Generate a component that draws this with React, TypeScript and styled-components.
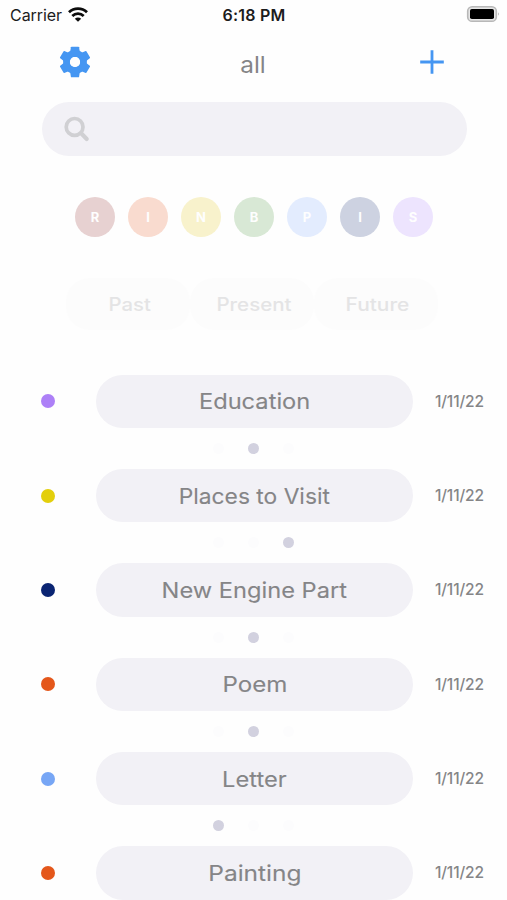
import React from "react";
import styled, { createGlobalStyle } from "styled-components";

const GlobalStyle = createGlobalStyle`
  * { box-sizing: border-box; }
  body { margin: 0; background: #fefefe; overflow: hidden; }
  button { border: 0; padding: 0; background: none; font: inherit; color: inherit; }
`;

const Screen = styled.main`
  width: 507px;
  height: 900px;
  overflow: hidden;
  display: flex;
  flex-direction: column;
  background: #fefefe;
  color: #858587;
  font-family: Inter, "Open Sans", sans-serif;
`;

const StatusBar = styled.header`
  height: 30px;
  flex: none;
  display: grid;
  grid-template-columns: 1fr auto 1fr;
  align-items: center;
  padding: 0 7px 2px 10px;
  color: #1c1c1c;
  font-size: 16px;
`;

const Carrier = styled.div`
  display: flex;
  align-items: center;
  gap: 6px;
  letter-spacing: -0.05px;
  padding-top: 1px;
`;

const Clock = styled.time`
  font-weight: 600;
  letter-spacing: 0.25px;
  padding-top: 2px;
  margin-left: -2px;
`;

const BatterySlot = styled.div`
  display: flex;
  justify-content: flex-end;
`;

const NavBar = styled.nav`
  height: 72px;
  flex: none;
  display: grid;
  grid-template-columns: 30px 1fr 30px;
  align-items: center;
  padding: 0 60px 8px;
`;

const NavButton = styled.button`
  display: grid;
  place-items: center;
  height: 32px;
  color: #4596f2;
`;

const Title = styled.h1`
  margin: 6px 0 0;
  text-align: center;
  font-size: 23px;
  line-height: 30px;
  font-weight: 400;
`;

const Stretch = styled.span<{ $x: number }>`
  display: inline-block;
  white-space: nowrap;
  transform: scaleX(${(p) => p.$x});
`;

const SearchBar = styled.div`
  width: 425px;
  height: 54px;
  flex: none;
  margin-left: 41.5px;
  padding-left: 22px;
  display: flex;
  align-items: center;
  border-radius: 27px;
  background: #f2f1f6;
`;

const Filters = styled.div`
  display: flex;
  gap: 13px;
  margin: 40.5px 0 0 75px;
`;

const Filter = styled.button<{ $color: string }>`
  width: 40px;
  height: 40px;
  border-radius: 50%;
  background: ${(p) => p.$color};
  color: #fefefe;
  font-size: 13px;
  font-weight: 700;
`;

const Tenses = styled.div`
  display: flex;
  flex: none;
  width: 372px;
  height: 52px;
  margin: 41px 0 0 66px;
`;

const Tense = styled.button`
  flex: 1;
  border-radius: 24px;
  background: #fcfcfc;
  color: #e4e4e5;
  font-size: 18px;
  font-weight: 500;
  padding: 2px 0 0 3px;
`;

const Entries = styled.ul`
  list-style: none;
  margin: 45px 0 0;
  padding: 0;
`;

const Entry = styled.li`
  height: 94.35px;
`;

const EntryRow = styled.div`
  display: grid;
  grid-template-columns: 14px 317px 50px;
  column-gap: 41px;
  align-items: center;
  height: 53.5px;
  margin-left: 41px;
`;

const Marker = styled.span<{ $color: string }>`
  width: 14px;
  height: 14px;
  border-radius: 50%;
  background: ${(p) => p.$color};
`;

const Pill = styled.button`
  height: 53.5px;
  border-radius: 27px;
  background: #f2f1f6;
  font-size: 21.5px;
  font-weight: 400;
  -webkit-text-stroke: 0.1px currentColor;
`;

const EntryDate = styled.time`
  margin-left: -19px;
  font-size: 15.5px;
  font-weight: 500;
  letter-spacing: -0.15px;
`;

const Pager = styled.div`
  display: flex;
  justify-content: center;
  gap: 24px;
  padding-top: 15px;
`;

const PagerDot = styled.span<{ $active: boolean }>`
  width: 11px;
  height: 11px;
  border-radius: 50%;
  background: ${(p) => (p.$active ? "#d2d1df" : "#fcfcfd")};
`;

const WifiIcon = () => (
  <svg width="20" height="15" viewBox="0 0 20 15" fill="none" stroke="#0c0c0c" strokeWidth="2.8">
    <path d="M1 5.2C6 .5 14 .5 19 5.2" />
    <path d="M4.3 8.9C7.5 5.9 12.5 5.9 15.7 8.9" />
    <path d="M6.8 11.8Q10 9.3 13.2 11.8L10 14.8Z" fill="#0c0c0c" stroke="none" />
  </svg>
);

const BatteryIcon = () => (
  <svg width="34" height="18" viewBox="0 0 34 18">
    <rect x="1.7" y="1.7" width="28.6" height="14.6" rx="4.4" fill="#e6e6e6" stroke="#b8b8b8" strokeWidth="1.6" />
    <rect x="4" y="4" width="24" height="10" rx="1.8" fill="#000" />
    <path d="M32 7.2q1.8 1.8 0 3.6Z" fill="#aaa" />
  </svg>
);

const GearIcon = () => (
  <svg width="30" height="32" viewBox="-15 -16 30 32" fill="currentColor" overflow="visible">
    {[0, 60, 120, 180, 240, 300].map((angle) => (
      <path
        key={angle}
        transform={`rotate(${angle})`}
        d="M-3.4 -15.3H3.4Q4 -15.3 4.1 -14.7L5 -9H-5L-4.1 -14.7Q-4 -15.3 -3.4 -15.3Z"
      />
    ))}
    <circle r="8.5" fill="none" stroke="currentColor" strokeWidth="6.8" />
    <circle r="5" fill="#fefefe" />
  </svg>
);

const PlusIcon = () => (
  <svg width="24" height="24" viewBox="0 0 24 24" stroke="currentColor" strokeWidth="2.8">
    <path d="M12 0.2v23.6M.2 12h23.6" />
  </svg>
);

const SearchIcon = () => (
  <svg width="26" height="26" viewBox="0 0 26 26" fill="none" stroke="#d0d0d3" strokeLinecap="round">
    <circle cx="10.6" cy="10.9" r="8.4" strokeWidth="3.7" />
    <path d="M17.4 17.6l5.3 5.3" strokeWidth="4.2" />
  </svg>
);

const filters = [
  { letter: "R", color: "#e7d1d1" },
  { letter: "I", color: "#f9dbcf" },
  { letter: "N", color: "#f8f2cc" },
  { letter: "B", color: "#d8e8d5" },
  { letter: "P", color: "#e3ecfe" },
  { letter: "I", color: "#cdd2e1" },
  { letter: "S", color: "#ede4fe" },
];

const tenses = [
  { label: "Past", stretch: 1.13 },
  { label: "Present", stretch: 1.14 },
  { label: "Future", stretch: 1.16 },
];

const entries = [
  { title: "Education", color: "#ad80f7", page: 1, stretch: 1.1 },
  { title: "Places to Visit", color: "#e3cf0c", page: 2, stretch: 1.06 },
  { title: "New Engine Part", color: "#0a2472", page: 1, stretch: 1.1 },
  { title: "Poem", color: "#e4571b", page: 1, stretch: 1.12 },
  { title: "Letter", color: "#77a6f5", page: 0, stretch: 1.1 },
  { title: "Painting", color: "#e4571b", page: 1, stretch: 1.14 },
];

export default function App() {
  return (
    <>
      <GlobalStyle />
      <Screen>
        <StatusBar>
          <Carrier>Carrier <WifiIcon /></Carrier>
          <Clock>6:18 PM</Clock>
          <BatterySlot><BatteryIcon /></BatterySlot>
        </StatusBar>
        <NavBar>
          <NavButton aria-label="Settings"><GearIcon /></NavButton>
          <Title><Stretch $x={1.06}>all</Stretch></Title>
          <NavButton aria-label="Add"><PlusIcon /></NavButton>
        </NavBar>
        <SearchBar><SearchIcon /></SearchBar>
        <Filters>
          {filters.map((f, i) => <Filter key={i} $color={f.color}>{f.letter}</Filter>)}
        </Filters>
        <Tenses>
          {tenses.map((t) => <Tense key={t.label}><Stretch $x={t.stretch}>{t.label}</Stretch></Tense>)}
        </Tenses>
        <Entries>
          {entries.map((e) => (
            <Entry key={e.title}>
              <EntryRow>
                <Marker $color={e.color} />
                <Pill><Stretch $x={e.stretch}>{e.title}</Stretch></Pill>
                <EntryDate>1/11/22</EntryDate>
              </EntryRow>
              <Pager>
                {[0, 1, 2].map((n) => <PagerDot key={n} $active={n === e.page} />)}
              </Pager>
            </Entry>
          ))}
        </Entries>
      </Screen>
    </>
  );
}
